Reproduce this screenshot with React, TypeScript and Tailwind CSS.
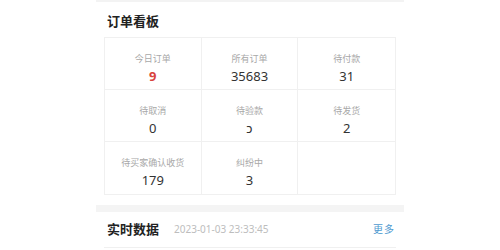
import React from 'react'

// Order dashboard card: 3x3 stat grid, then a "realtime data" header row.

type Stat = { label: string; value?: string; highlight?: boolean }

const STATS: Stat[] = [
  { label: '今日订单', value: '9', highlight: true },
  { label: '所有订单', value: '35683' },
  { label: '待付款', value: '31' },
  { label: '待取消', value: '0' },
  { label: '待验款', value: 'ↄ' },
  { label: '待发货', value: '2' },
  { label: '待买家确认收货', value: '179' },
  { label: '纠纷中', value: '3' },
  { label: '' },
]

const FONT = "font-['Noto_Sans','Noto_Sans_CJK_SC',sans-serif]"

function StatCell({ s, i }: { s: Stat; i: number }) {
  const col = i % 3
  const row = Math.floor(i / 3)
  return (
    <div
      className={`h-[52px] flex flex-col items-center pt-[15px] ${col < 2 ? 'border-r border-[#f0f0f0]' : ''} ${row < 2 ? 'border-b border-[#f0f0f0]' : ''}`}
    >
      {s.label && <div className="text-[9px] leading-[12px] text-[#a8a8a8]">{s.label}</div>}
      {s.value && (
        <div
          className={`mt-[3px] text-[13px] leading-[16px] ${s.highlight ? 'text-[#d8433c] font-bold' : 'text-[#333]'}`}
        >
          {s.value}
        </div>
      )}
    </div>
  )
}

export default function App() {
  return (
    <div className={`w-[500px] h-[250px] bg-white overflow-hidden ${FONT}`}>
      <div className="w-[308px] mx-auto">
        <div className="h-[2px] bg-[#f3f3f3]" />
        <div className="px-2">
          <div className="pl-[3px] pt-[10px] h-[35px] text-[13px] leading-[18px] font-bold text-[#222]">订单看板</div>
          <div className="grid grid-cols-3 border border-[#f0f0f0]">
            {STATS.map((s, i) => (
              <StatCell key={i} s={s} i={i} />
            ))}
          </div>
        </div>
        <div className="mt-[10px] h-[7px] bg-[#f4f4f4]" />
        <div className="px-2">
          <div className="h-[35px] flex items-center pl-[3px] pr-[1px]">
            <span className="text-[13px] font-bold text-[#222]">实时数据</span>
            <span className="ml-[15px] text-[10px] text-[#bdbdbd]">2023-01-03 23:33:45</span>
            <span className="ml-auto text-[10px] text-[#4f9ad0] tracking-[1px]">更多</span>
          </div>
          <div className="border-t border-[#f0f0f0]" />
        </div>
      </div>
    </div>
  )
}
